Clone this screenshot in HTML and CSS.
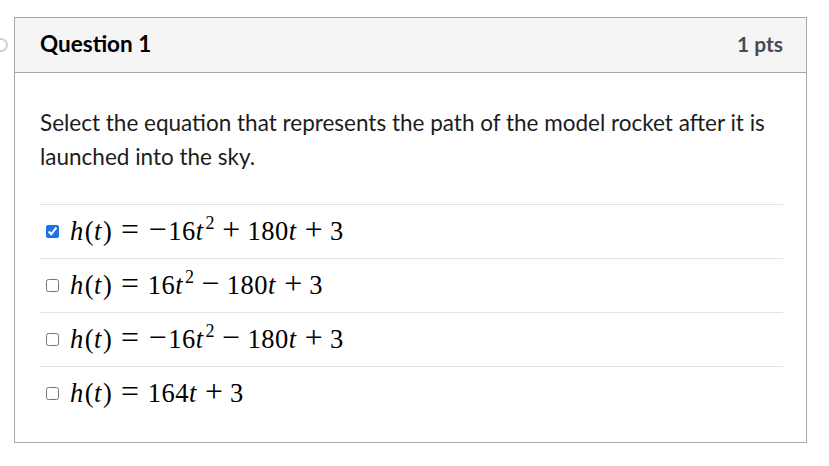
FILE: index.html
```
<!DOCTYPE html>
<html>
<head>
<meta charset="utf-8">
<link rel="stylesheet" href="styles.css">
</head>
<body>
<div class="page">
  <div class="edge-mark"></div>
  <div class="card">
    <div class="header">
      <span class="title">Question 1</span>
      <span class="pts">1 pts</span>
    </div>
    <div class="body">
      <p class="prompt">Select the equation that represents the path of the model rocket after it is launched into the sky.</p>
      <div class="answers">
        <label class="answer"><input type="checkbox" checked><span class="math"><i>h</i>(<i>t</i>)<span class="rel">=</span><span class="un">−</span>16<i>t</i><sup>2</sup><span class="bin">+</span>180<i>t</i><span class="bin">+</span>3</span></label>
        <label class="answer"><input type="checkbox"><span class="math"><i>h</i>(<i>t</i>)<span class="rel">=</span>16<i>t</i><sup>2</sup><span class="bin">−</span>180<i>t</i><span class="bin">+</span>3</span></label>
        <label class="answer"><input type="checkbox"><span class="math"><i>h</i>(<i>t</i>)<span class="rel">=</span><span class="un">−</span>16<i>t</i><sup>2</sup><span class="bin">−</span>180<i>t</i><span class="bin">+</span>3</span></label>
        <label class="answer"><input type="checkbox"><span class="math"><i>h</i>(<i>t</i>)<span class="rel">=</span>164<i>t</i><span class="bin">+</span>3</span></label>
      </div>
    </div>
  </div>
</div>
</body>
</html>
```
FILE: styles.css
```
html, body {
  margin: 0;
  padding: 0;
  background: #ffffff;
}
body {
  font-family: Lato, "Liberation Sans", sans-serif;
  color: #2d3b45;
}
.page {
  position: relative;
  padding: 17px 22px 0 14px;
  width: 829px;
  box-sizing: border-box;
}
.edge-mark {
  position: absolute;
  left: -6px;
  top: 38px;
  width: 10px;
  height: 10px;
  border-radius: 50%;
  border: 2px solid #c4d3e0;
}
.card {
  border: 1px solid #a8a8a8;
  width: 793px;
  box-sizing: border-box;
  height: 426px;
}
.header {
  height: 55px;
  background: #f5f5f5;
  border-bottom: 1px solid #a8a8a8;
  display: flex;
  align-items: center;
  justify-content: space-between;
  padding: 0 23px 0 25px;
  box-sizing: border-box;
}
.title {
  font-weight: 700;
  font-size: 22.5px;
  color: #000000;
  margin-top: -3px;
}
.pts {
  font-weight: 700;
  font-size: 21px;
  color: #444c55;
  margin-top: -3px;
}
.body {
  padding: 33px 23px 0 25px;
}
.prompt {
  margin: 0 0 30px 0;
  font-size: 22.5px;
  line-height: 34px;
  color: #1c1c1c;
}
.answers {
  border-top: 1px solid #e3e3e3;
}
.answer {
  display: flex;
  align-items: center;
  height: 53px;
  border-bottom: 1px solid #e3e3e3;
  padding-left: 6px;
}
.answer:last-child {
  border-bottom: none;
}
.answer input {
  margin: 0 11px 0 0;
  width: 13px;
  height: 13px;
  accent-color: #1a73e8;
}
.math {
  font-family: "Liberation Serif", "DejaVu Serif", serif;
  font-size: 26.5px;
  color: #000;
  white-space: nowrap;
  letter-spacing: 0.5px;
  margin-top: -3px;
}
.math i {
  font-style: italic;
  padding-right: 1px;
}
.math sup {
  font-size: 18px;
  vertical-align: 0;
  position: relative;
  top: -11px;
  margin-left: 1px;
}
.rel, .bin, .un {
  display: inline-block;
  font-size: 1.2em;
  width: 0.648em;
  text-align: center;
  letter-spacing: 0;
}
.rel {
  margin: 0 0.232em;
}
.bin {
  margin: 0 0.185em;
}
```
